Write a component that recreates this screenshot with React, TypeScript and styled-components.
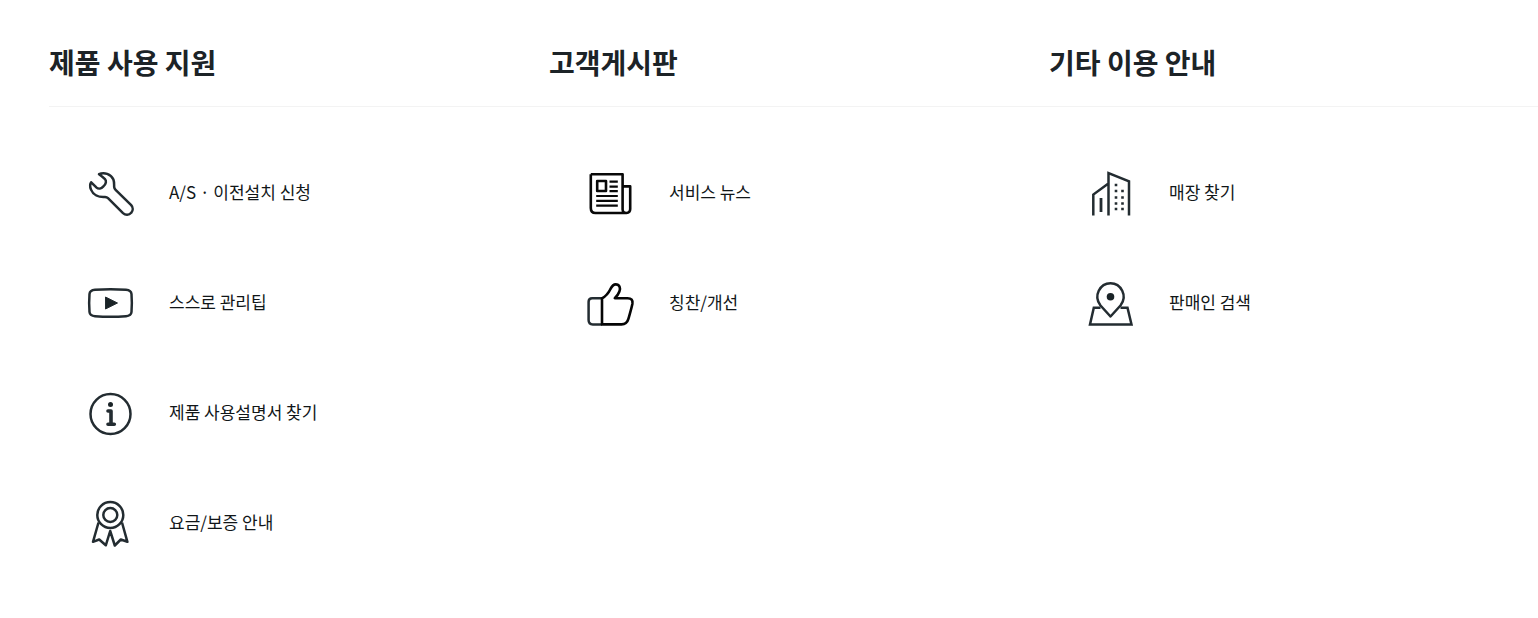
import React from 'react';
import styled, { createGlobalStyle } from 'styled-components';

const GlobalStyle = createGlobalStyle`
  *, *::before, *::after { box-sizing: border-box; }
  body {
    margin: 0;
    background: #fff;
    color: #1c2327;
    font-family: "Noto Sans CJK KR", sans-serif;
  }
`;

const Menu = styled.main`
  display: grid;
  grid-template-columns: repeat(3, 1fr);
  column-gap: 11px;
  padding: 41px 0 40px 49px;
`;

const Column = styled.section`
  min-width: 0;
`;

const Title = styled.h2`
  margin: 0 -11px 0 0;
  padding-bottom: 23px;
  border-bottom: 1px solid #f3f3f3;
  font-size: 28px;
  font-weight: 700;
  line-height: 42px;

  ${Column}:last-child & {
    margin-right: 0;
  }
`;

const List = styled.ul`
  list-style: none;
  margin: 0;
  padding: 30px 0 0;
`;

const ItemLink = styled.a`
  display: flex;
  align-items: center;
  gap: 25px;
  height: 110px;
  padding-left: 31px;
  color: #111618;
  font-size: 17px;
  line-height: 26px;
  text-decoration: none;

  &:hover span {
    text-decoration: underline;
  }
`;

const IconSvg = styled.svg`
  flex: none;
  width: 64px;
  height: 64px;
  fill: none;
  stroke: #232c31;
  stroke-width: 2.5;
  stroke-linejoin: round;
`;

const Icon = ({ children }: { children: React.ReactNode }) => (
  <IconSvg viewBox="0 0 64 64" aria-hidden="true">{children}</IconSvg>
);

const Wrench = () => (
  <Icon>
    <path d="M19 14.2C24 11.8 31 13.8 33.4 19.5C34.4 22.2 34 25 34.2 27.2C34.3 28.4 34.8 29 35.6 29.8L51.2 45.2C53.2 47.4 53.2 50.6 51.2 52.8C49 55.4 45.4 55.4 43 53.2L28 38.2C27 37.2 26.2 37 25 36.9C18.5 37.4 13 34.6 11 29.6C9.8 26.8 9.9 24.2 11.2 22.3L16.6 27.6C18.4 29.2 21.2 28.8 23.4 26.4C26.2 23.8 26.6 20.8 25 19.2C23.4 17.6 21.4 15.8 19 14.2Z" />
  </Icon>
);

const Video = () => (
  <Icon>
    <path d="M15 19.8Q30.5 18.6 46 19.8Q51.2 20.3 51.5 24Q52.2 33 51.5 42Q51.2 45.7 46 46.2Q30.5 47.4 15 46.200Q9.8 45.7 9.5 42Q8.8 33 9.5 24Q9.8 20.3 15 19.8Z" />
    <path d="M25.5 27V39L37.5 33Z" fill="#1a2327" strokeWidth="1" />
  </Icon>
);

const Info = () => (
  <Icon>
    <circle cx="30.5" cy="34" r="20" />
    <circle cx="30.5" cy="24.6" r="2.5" fill="#1a2327" stroke="none" />
    <path d="M28 31H31V44M28 44.3H34.3" strokeWidth="3.6" strokeLinecap="round" />
  </Icon>
);

const Ribbon = () => (
  <Icon>
    <circle cx="30.3" cy="25" r="13" />
    <circle cx="30.3" cy="25" r="7" />
    <path d="M18.5 32.5L13 51.8L19.2 49.5L25.8 55.3L30.2 41L34.8 55.5L40.8 49.5L47.4 51.8L42 32.5" />
  </Icon>
);

const News = () => (
  <Icon>
    <g stroke="#080808">
      <path d="M10.8 14.2H42.6V49.5C42.6 54.5 50.2 54 50.2 49V26.4H43M10.8 14.2V48C10.8 51.5 12.5 53 15.5 53H47" strokeWidth="2.6" />
      <rect x="17.2" y="21" width="8.8" height="10" strokeWidth="2.6" />
      <path d="M29.5 21.6H37.8M29.5 26.6H37.8M29.5 31.2H37.8M16.2 36H37.8M16.2 40.8H37.8M16.2 45.6H37.8" strokeWidth="2.2" />
    </g>
  </Icon>
);

const ThumbUp = () => (
  <Icon>
    <path d="M22 28.2H12.2C9.8 28.2 8.6 29.4 8.6 31.8V50C8.600 53 10 54.400 12.800 54.400H22" />
    <path d="M22 54.4V28.4C26 26 28.3 23.500 30.2 19.500C31.8 16.500 32.8 14.400 35.6 14.400C39.6 14.400 40.8 18 39.4 21.500C38.5 24 36.8 26.200 34.8 28.200H47.5C51.5 28.200 53 30.300 52.400 33.800C51.3 39.200 49.8 44 48.300 49.200C47.2 53.200 45 54.400 41.500 54.400Z" stroke="#050505" strokeWidth="2.6" />
  </Icon>
);

const Building = () => (
  <Icon>
    <path d="M13.3 55.5V34.6L28.4 23.5M28.5 55.5V13.2L49 21.4V55.5" strokeLinejoin="miter" />
    <path d="M21 38V52" strokeWidth="2.8" />
    <path d="M36 23.8V26.2M36 29.8V32.2M36 36.3V38.7M36 42.3V44.7M36 47.8V50.2M42.5 29.8V32.2M42.5 36.3V38.7M42.5 42.3V44.7M42.5 47.8V50.2" strokeWidth="2.6" />
  </Icon>
);

const MapPin = () => (
  <Icon>
    <path d="M20.5 37.8H13.8L10 54.4H51.5L47.5 37.8H40.5" strokeLinejoin="miter" />
    <path d="M30.5 46.5L20.5 35.5C13 26 20 13.2 30.5 13.2S48 26 40.5 35.5Z" />
    <circle cx="30.5" cy="26.8" r="3.8" fill="#1a2327" stroke="none" />
  </Icon>
);

const groups = [
  {
    title: '제품 사용 지원',
    items: [
      { label: 'A/S · 이전설치 신청', Glyph: Wrench },
      { label: '스스로 관리팁', Glyph: Video },
      { label: '제품 사용설명서 찾기', Glyph: Info },
      { label: '요금/보증 안내', Glyph: Ribbon },
    ],
  },
  {
    title: '고객게시판',
    items: [
      { label: '서비스 뉴스', Glyph: News },
      { label: '칭찬/개선', Glyph: ThumbUp },
    ],
  },
  {
    title: '기타 이용 안내',
    items: [
      { label: '매장 찾기', Glyph: Building },
      { label: '판매인 검색', Glyph: MapPin },
    ],
  },
];

export default function App() {
  return (
    <>
      <GlobalStyle />
      <Menu>
        {groups.map(({ title, items }) => (
          <Column key={title}>
            <Title>{title}</Title>
            <List>
              {items.map(({ label, Glyph }) => (
                <li key={label}>
                  <ItemLink href="#">
                    <Glyph />
                    <span>{label}</span>
                  </ItemLink>
                </li>
              ))}
            </List>
          </Column>
        ))}
      </Menu>
    </>
  );
}
